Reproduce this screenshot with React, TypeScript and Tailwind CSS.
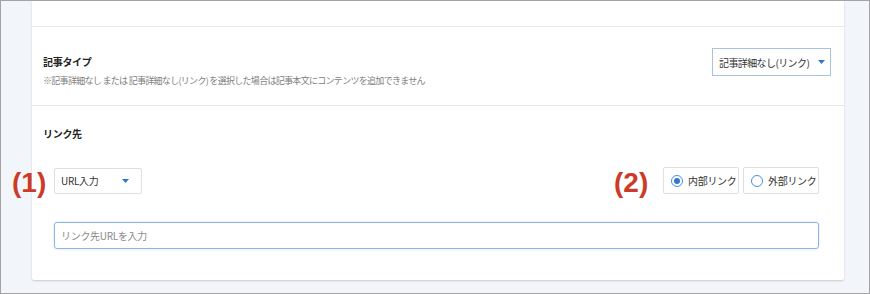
const font = { fontFamily: '"Noto Sans CJK JP", "Noto Sans", sans-serif' };
const latin = { fontFamily: '"Liberation Sans", Arial, sans-serif' };

function Caret() {
  return (
    <svg width="7" height="4" viewBox="0 0 7 4" className="shrink-0">
      <path d="M0 0h7L3.5 4z" fill="#2f78d0" />
    </svg>
  );
}

function Radio({ label, checked }: { label: string; checked?: boolean }) {
  return (
    <label className="flex h-[27px] w-[76px] items-center gap-[5px] whitespace-nowrap rounded-[2px] border border-[#dcdfe3] bg-white pl-[7px] text-[10px] tracking-[-0.3px] text-[#333]">
      <span className="flex h-[12px] w-[12px] shrink-0 items-center justify-center rounded-full border border-[#4a90e2] bg-white">
        {checked && <span className="h-[6px] w-[6px] rounded-full bg-[#2f78d0]" />}
      </span>
      {label}
    </label>
  );
}

export default function App() {
  return (
    <div
      style={font}
      className="relative h-[294px] w-[870px] overflow-hidden border border-[#a3a3a3] bg-[#f2f6fa]"
    >
      <div className="ml-[31px] w-[812px] rounded-b-[2px] bg-white shadow-[0_1px_2px_rgba(0,0,0,0.18)]">
        <div className="h-[26px] border-b border-[#e4e7eb]" />

        <div className="flex h-[79px] justify-between border-b border-[#e4e7eb] pl-[11px] pr-[13px]">
          <div className="pt-[27px]">
            <div className="text-[10px] font-bold leading-[16px] tracking-[-0.3px] text-[#222]">記事タイプ</div>
            <div className="mt-[4px] whitespace-nowrap text-[9px] leading-[14px] tracking-[-0.7px] text-[#808080]">
              ※記事詳細なし または 記事詳細なし(リンク) を選択した場合は記事本文にコンテンツを追加できません
            </div>
          </div>
          <div className="pt-[21px]">
            <div className="flex h-[28px] w-[119px] items-center justify-between whitespace-nowrap border border-[#a9c3df] pl-[6px] pr-[5px] text-[10px] tracking-[-0.6px] text-[#333]">
              <span>記事詳細なし(リンク)</span>
              <Caret />
            </div>
          </div>
        </div>

        <div className="px-[22px] pb-[31px] pr-[25px] pt-[20px]">
          <div className="-ml-[11px] text-[10px] font-bold leading-[16px] tracking-[-0.3px] text-[#222]">リンク先</div>
          <div className="mt-[25px] flex items-center justify-between">
            <div className="flex h-[26px] w-[88px] items-center justify-between whitespace-nowrap rounded-[2px] border border-[#dcdfe3] pl-[6px] pr-[12px] text-[10px] tracking-[-0.3px] text-[#333]">
              <span>URL入力</span>
              <Caret />
            </div>
            <div className="flex gap-[4px]">
              <Radio label="内部リンク" checked />
              <Radio label="外部リンク" />
            </div>
          </div>
          <input
            placeholder="リンク先URLを入力"
            className="mt-[28px] block h-[27px] w-full rounded-[3px] border border-[#8db5e6] px-[6px] text-[10px] tracking-[-0.3px] text-[#333] shadow-[0_0_2px_rgba(74,144,226,0.35)] outline-none placeholder:text-[#8a8a8a]"
          />
        </div>
      </div>

      <span
        style={latin}
        className="absolute left-[11px] top-[166px] text-[28px] font-bold leading-[32px] text-[#cc3a28] [text-shadow:0_0_2px_#fff,0_0_2px_#fff]"
      >
        (1)
      </span>
      <span
        style={latin}
        className="absolute left-[613px] top-[166px] text-[28px] font-bold leading-[32px] text-[#cc3a28]"
      >
        (2)
      </span>
    </div>
  );
}
